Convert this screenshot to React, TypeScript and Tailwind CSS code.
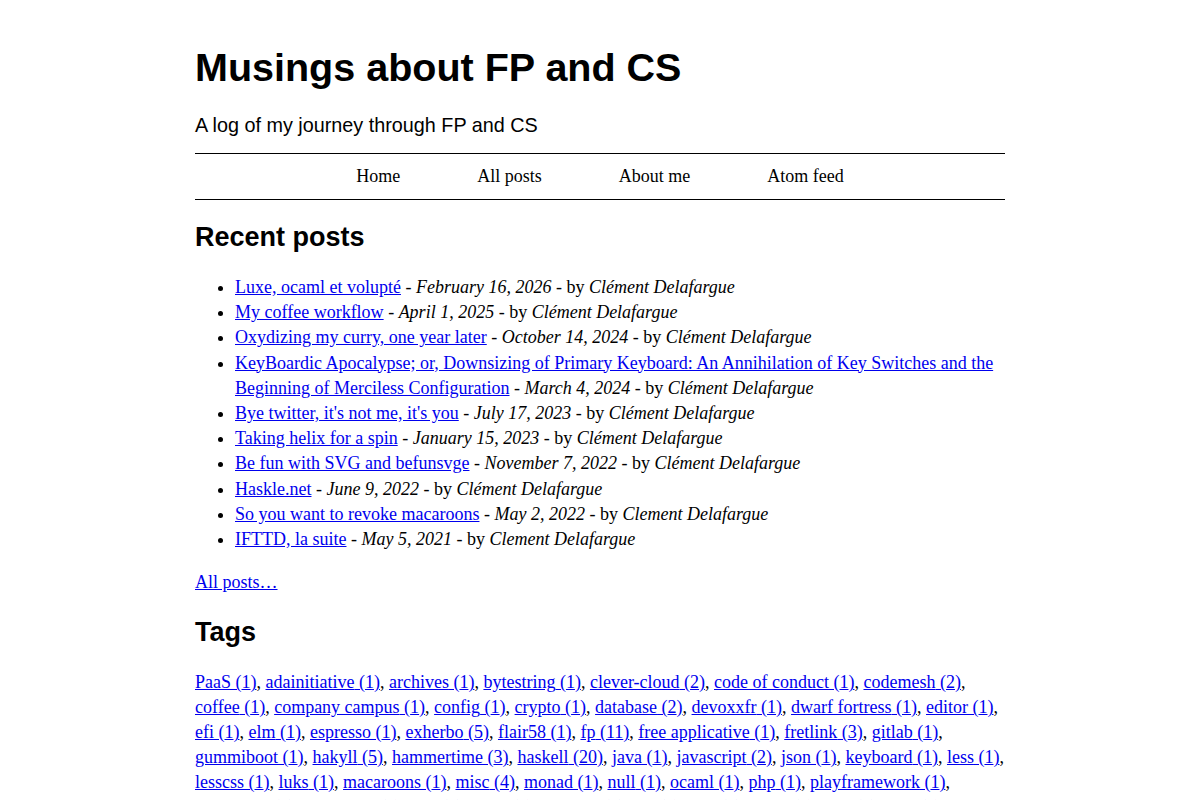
const posts = [
  { title: "Luxe, ocaml et volupté", date: "February 16, 2026", author: "Clément Delafargue" },
  { title: "My coffee workflow", date: "April 1, 2025", author: "Clément Delafargue" },
  { title: "Oxydizing my curry, one year later", date: "October 14, 2024", author: "Clément Delafargue" },
  {
    title:
      "KeyBoardic Apocalypse; or, Downsizing of Primary Keyboard: An Annihilation of Key Switches and the Beginning of Merciless Configuration",
    date: "March 4, 2024",
    author: "Clément Delafargue",
  },
  { title: "Bye twitter, it's not me, it's you", date: "July 17, 2023", author: "Clément Delafargue" },
  { title: "Taking helix for a spin", date: "January 15, 2023", author: "Clément Delafargue" },
  { title: "Be fun with SVG and befunsvge", date: "November 7, 2022", author: "Clément Delafargue" },
  { title: "Haskle.net", date: "June 9, 2022", author: "Clément Delafargue" },
  { title: "So you want to revoke macaroons", date: "May 2, 2022", author: "Clement Delafargue" },
  { title: "IFTTD, la suite", date: "May 5, 2021", author: "Clement Delafargue" },
];

const tags: [string, number][] = [
  ["PaaS", 1], ["adainitiative", 1], ["archives", 1], ["bytestring", 1], ["clever-cloud", 2],
  ["code of conduct", 1], ["codemesh", 2], ["coffee", 1], ["company campus", 1], ["config", 1],
  ["crypto", 1], ["database", 2], ["devoxxfr", 1], ["dwarf fortress", 1], ["editor", 1],
  ["efi", 1], ["elm", 1], ["espresso", 1], ["exherbo", 5], ["flair58", 1], ["fp", 11],
  ["free applicative", 1], ["fretlink", 3], ["gitlab", 1], ["gummiboot", 1], ["hakyll", 5],
  ["hammertime", 3], ["haskell", 20], ["java", 1], ["javascript", 2], ["json", 1],
  ["keyboard", 1], ["less", 1], ["lesscss", 1], ["luks", 1], ["macaroons", 1], ["misc", 4],
  ["monad", 1], ["null", 1], ["ocaml", 1], ["php", 1], ["playframework", 1],
  ["postgresql", 3], ["purescript", 2], ["rust", 2], ["scala", 6], ["security", 2],
  ["sql", 2], ["talk", 3], ["types", 2], ["vim", 1], ["web", 2],
];

const navItems = ["Home", "All posts", "About me", "Atom feed"];

const linkClass = "text-[#0000ee] underline";

export default function App() {
  return (
    <div className="min-h-screen bg-white text-black font-['Liberation_Serif','Times_New_Roman',serif] text-[18px] leading-[25.2px]">
      <div className="mx-auto w-[810px] pt-[43px] pb-10">
        <header>
          <h1 className="font-['Liberation_Sans',Arial,sans-serif] text-[39.5px] leading-[48px] font-bold">
            Musings about FP and CS
          </h1>
          <p className="mt-[22px] font-['Liberation_Sans',Arial,sans-serif] text-[19.8px] leading-[24px]">
            A log of my journey through FP and CS
          </p>
        </header>

        <nav className="mt-[16px] flex h-[47px] items-center justify-center gap-[77px] border-y border-black">
          {navItems.map((item) => (
            <a key={item} className="leading-[45px]">
              {item}
            </a>
          ))}
        </nav>

        <main>
          <h2 className="mt-[21px] font-['Liberation_Sans',Arial,sans-serif] text-[27px] leading-[32px] font-bold">
            Recent posts
          </h2>
          <ul className="mt-[22px] list-disc pl-[40px]">
            {posts.map((post) => (
              <li key={post.title}>
                <a className={linkClass}>{post.title}</a> - <em>{post.date}</em> - by{" "}
                <em>{post.author}</em>
              </li>
            ))}
          </ul>
          <p className="mt-[18px]">
            <a className={linkClass}>All posts…</a>
          </p>

          <h2 className="mt-[21px] font-['Liberation_Sans',Arial,sans-serif] text-[27px] leading-[32px] font-bold">
            Tags
          </h2>
          <p className="mt-[22px] leading-[25px]">
            {tags.map(([name, count], idx) => (
              <span key={name}>
                <a className={linkClass}>
                  {name} ({count})
                </a>
                {idx < tags.length - 1 ? ", " : ""}
              </span>
            ))}
          </p>
        </main>
      </div>
    </div>
  );
}
